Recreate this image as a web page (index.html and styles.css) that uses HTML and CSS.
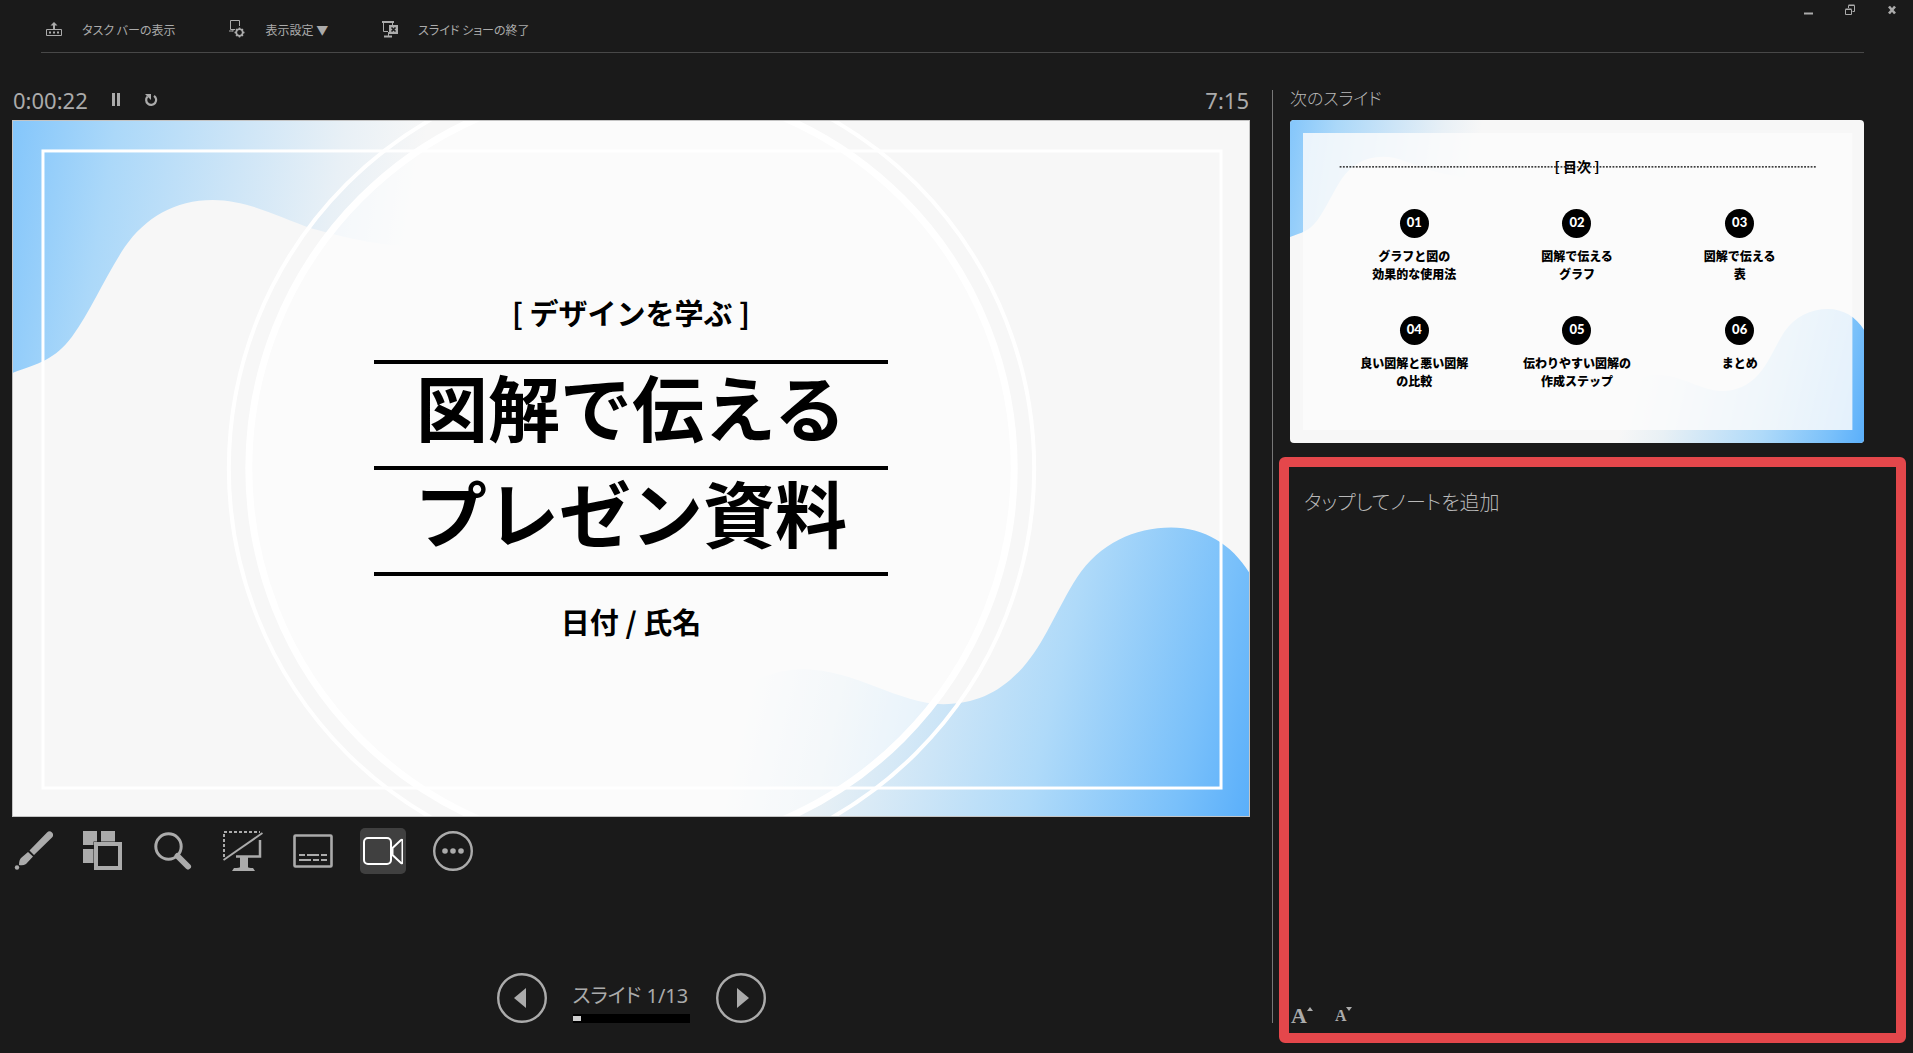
FILE: index.html
```html
<!DOCTYPE html>
<html lang="ja">
<head>
<meta charset="utf-8">
<title>発表者ツール</title>
<link rel="stylesheet" href="styles.css">
</head>
<body>
<svg class="defs" aria-hidden="true">
  <defs>
    <linearGradient id="blue-tl" gradientUnits="userSpaceOnUse" x1="0" y1="0" x2="405" y2="66">
      <stop offset="0" stop-color="#84c6fb"/>
      <stop offset=".25" stop-color="#abd8f9"/>
      <stop offset=".55" stop-color="#cde5f7"/>
      <stop offset=".8" stop-color="#e8f0f6"/>
      <stop offset="1" stop-color="#f7f7f7"/>
    </linearGradient>
    <linearGradient id="blue-br" gradientUnits="userSpaceOnUse" x1="1237" y1="696" x2="732" y2="576">
      <stop offset="0" stop-color="#5aaffa"/>
      <stop offset=".14" stop-color="#79c0fa"/>
      <stop offset=".42" stop-color="#afdaf9"/>
      <stop offset=".62" stop-color="#cce5f7"/>
      <stop offset=".82" stop-color="#e8f0f5"/>
      <stop offset="1" stop-color="#f7f7f7"/>
    </linearGradient>
    <symbol id="waves" viewBox="0 0 1237 696" preserveAspectRatio="none">
      <rect width="1237" height="696" fill="#f7f7f7"/>
      <path fill="url(#blue-tl)" d="M0 0H430V125C380 130 330 116 300 108C265 96 235 79 200 79C162 79 132 97 112 126C92 156 78 190 59 216C42 239 25 243 0 252Z"/>
      <path fill="url(#blue-br)" d="M1237 696V452C1220 424 1192 407 1159 407C1123 407 1087 423 1065 457C1045 488 1032 524 1010 548C988 572 964 584 931 584C887 584 842 549 791 549C751 549 720 570 690 600V696Z"/>
    </symbol>
  </defs>
</svg>

<header class="topbar">
  <nav class="commands" aria-label="表示コマンド">
    <button class="command" type="button">
      <svg width="16" height="18" viewBox="0 0 16 18" fill="none" stroke="currentColor"><path d="M.5 9.500h15v6H.5z"/><path d="M3 12.500h10" stroke-width="2" stroke-dasharray="2 2"/><path d="M8 9V3" stroke-width="2"/><path d="M4.500 5.500L8 2l3.500 3.500z" fill="currentColor" stroke="none"/></svg>
      タスク バーの表示
    </button>
    <button class="command" type="button">
      <svg width="16" height="18" viewBox="0 0 16 18" fill="none" stroke="currentColor"><path d="M6 9.500H1.500V.5h9V6M4 9.500v2M0 11h4" /><circle cx="10.500" cy="12.500" r="3.300" stroke-width="1.800"/><path d="M10.500 7.500v2m0 6v2m-5-5h2m6 0h2M7 9l1.500 1.500m4 4L14 16m0-7l-1.500 1.500m-4 4L7 16" stroke-width="1.400"/></svg>
      表示設定 ▼
    </button>
    <button class="command" type="button">
      <svg width="16" height="18" viewBox="0 0 16 18" fill="none" stroke="currentColor"><path d="M0 2h12" stroke-width="2"/><path d="M1.500 2v9.500H6M10.500 2v3M6.500 12v5" /><path d="M2 16.500h8" stroke-width="2"/><rect x="7" y="5" width="9" height="9" fill="currentColor" stroke="none"/><path d="M9.500 7.500l4 4m0-4l-4 4" stroke="#1a1a1a" stroke-width="1.600"/></svg>
      スライド ショーの終了
    </button>
  </nav>
  <div class="window-controls">
    <button type="button" aria-label="最小化"><svg width="10" height="12" viewBox="0 0 10 12"><path d="M1 9.500h9" stroke="currentColor" stroke-width="2"/></svg></button>
    <button type="button" aria-label="元に戻す"><svg width="10" height="12" viewBox="0 0 10 12" fill="none" stroke="currentColor"><path d="M.5 5.500h6v5h-6zM.5 5h6M3.500 4V1.500h6v6H7.500M3.500 1h6"/></svg></button>
    <button type="button" aria-label="閉じる"><svg width="10" height="12" viewBox="0 0 10 12"><path d="M2 2.500l6 7m0-7l-6 7" stroke="currentColor" stroke-width="2.600"/></svg></button>
  </div>
</header>
<hr class="rule">

<main class="presenter">
  <section class="current" aria-label="現在のスライド">
    <div class="timing">
      <time class="elapsed">0:00:22</time>
      <button type="button" aria-label="一時停止"><svg width="8" height="14" viewBox="0 0 8 14"><path d="M0 0h3v13H0zM5 0h3v13H5z" fill="currentColor"/></svg></button>
      <button type="button" aria-label="再開"><svg width="14" height="14" viewBox="0 0 14 14"><path d="M10 2.800A5 5 0 1 1 3.600 3.400" fill="none" stroke="currentColor" stroke-width="2.200"/><path d="M1 1h6v6z" fill="currentColor"/></svg></button>
      <time class="clock">7:15</time>
    </div>

    <div class="slide">
      <svg class="backdrop" viewBox="0 0 1237 696" preserveAspectRatio="none" aria-hidden="true">
        <use href="#waves" width="1237" height="696"/>
        <circle cx="619" cy="348" r="383" fill="#fff" fill-opacity=".5"/>
        <g fill="none" stroke="#fff">
          <circle cx="619" cy="348" r="403" stroke-width="4"/>
          <circle cx="619" cy="348" r="383" stroke-width="7"/>
          <rect x="30" y="30" width="1179" height="638" stroke-width="3"/>
        </g>
      </svg>
      <div class="cover">
        <p>[ デザインを学ぶ ]</p>
        <h1><span>図解で伝える</span><span>プレゼン資料</span></h1>
        <p>日付 / 氏名</p>
      </div>
    </div>

    <div class="tools">
      <button type="button" aria-label="ペン"><svg width="40" height="40" viewBox="0 0 40 40" fill="currentColor"><path d="M16.500 19.500L34 1.500a3.500 3.500 0 0 1 5 5L21 24zM15 21l5 4.500L13 33q-3 2-7 1q0-5 2-7z"/><circle cx="4" cy="36.500" r="2.200"/></svg></button>
      <button type="button" aria-label="すべてのスライド"><svg width="40" height="40" viewBox="0 0 40 40" fill="currentColor"><path d="M0 0h14v10.500H10.500V14H0zM18 0h14v10.500H18zM0 18h10.500v14H0z"/><path d="M13 13h24v24H13z" fill="none" stroke="currentColor" stroke-width="4"/></svg></button>
      <button type="button" aria-label="拡大"><svg width="40" height="40" viewBox="0 0 40 40" fill="none" stroke="currentColor"><circle cx="15.500" cy="15.500" r="12.700" stroke-width="3"/><path d="M24.500 25L35 35.500" stroke-width="6" stroke-linecap="round"/></svg></button>
      <button type="button" aria-label="黒い画面"><svg width="40" height="40" viewBox="0 0 40 40" fill="none" stroke="currentColor"><path d="M1 26V1h36" stroke-width="2" stroke-dasharray="3 2"/><path d="M.5 29L39.500 2" stroke-width="2"/><path d="M37 9v16.500H13" stroke-width="2.500"/><path d="M17 25h8v11q0 1 5 1l2 3H9l2-3q6 0 6-1z" fill="currentColor" stroke="none"/></svg></button>
      <button type="button" aria-label="字幕"><svg width="40" height="40" viewBox="0 0 40 40" fill="none" stroke="currentColor" stroke-width="2"><rect x="1.500" y="4.500" width="37" height="31" rx="1" stroke-width="2.600"/><path d="M6 24h6m2 0h12m2 0h6M6 29h12m2 0h6m2 0h6"/></svg></button>
      <button type="button" class="on" aria-label="カメラ" aria-pressed="true"><svg width="40" height="40" viewBox="0 0 40 40" fill="none" stroke="currentColor" stroke-width="2"><rect x="1" y="7" width="27" height="26" rx="4"/><path d="M29.500 17l8.500-8q1.500-1 1.500 1v21q0 2-1.500 1l-8.500-8z"/></svg></button>
      <button type="button" aria-label="その他"><svg width="40" height="40" viewBox="0 0 40 40" fill="currentColor"><circle cx="20" cy="20" r="18.800" fill="none" stroke="currentColor" stroke-width="2.400"/><circle cx="12" cy="20" r="2.800"/><circle cx="20" cy="20" r="2.800"/><circle cx="28" cy="20" r="2.800"/></svg></button>
    </div>

    <div class="pager">
      <button type="button" aria-label="前のスライド"><svg width="50" height="50" viewBox="0 0 50 50"><circle cx="25" cy="25" r="23.800" fill="none" stroke="currentColor" stroke-width="2.400"/><path d="M29 15v20L17 25z" fill="currentColor"/></svg></button>
      <div class="position">
        <span>スライド 1/13</span>
        <div class="progress" role="progressbar" aria-label="進行状況" aria-valuemin="0" aria-valuemax="13" aria-valuenow="1"><i></i></div>
      </div>
      <button type="button" aria-label="次のスライド"><svg width="50" height="50" viewBox="0 0 50 50"><circle cx="25" cy="25" r="23.800" fill="none" stroke="currentColor" stroke-width="2.400"/><path d="M21 15v20l12-10z" fill="currentColor"/></svg></button>
    </div>
  </section>

  <div class="divider"></div>

  <aside class="side">
    <section class="next">
      <h2>次のスライド</h2>
      <div class="thumb">
        <svg class="backdrop" viewBox="0 0 1237 696" preserveAspectRatio="none" aria-hidden="true">
          <use href="#waves" width="1237" height="696"/>
          <rect x="28" y="28" width="1184" height="640" fill="#fcfcfc" fill-opacity=".84"/>
          <path d="M107 101H1136" stroke="#000" stroke-width="3" stroke-dasharray="4 3"/>
        </svg>
        <h3>[ 目次 ]</h3>
        <ol class="contents">
          <li><b>01</b>グラフと図の<br>効果的な使用法</li>
          <li><b>02</b>図解で伝える<br>グラフ</li>
          <li><b>03</b>図解で伝える<br>表</li>
          <li><b>04</b>良い図解と悪い図解<br>の比較</li>
          <li><b>05</b>伝わりやすい図解の<br>作成ステップ</li>
          <li><b>06</b>まとめ</li>
        </ol>
      </div>
    </section>
    <section class="notes">
      <textarea aria-label="ノート" placeholder="タップしてノートを追加"></textarea>
      <div class="text-size">
        <button type="button" class="larger" aria-label="テキストの拡大">A<svg width="6" height="4" viewBox="0 0 6 4"><path d="M0 4l3-4 3 4z" fill="currentColor"/></svg></button>
        <button type="button" class="smaller" aria-label="テキストの縮小">A<svg width="6" height="4" viewBox="0 0 6 4"><path d="M0 0l3 4 3-4z" fill="currentColor"/></svg></button>
      </div>
    </section>
  </aside>
</main>
</body>
</html>
```

FILE: styles.css
```css
* { box-sizing: border-box; }

body {
  display: flex;
  flex-direction: column;
  min-height: 100vh;
  margin: 0;
  background: #1a1a1a;
  color: #ababab;
  font-family: "Noto Sans", "Noto Sans CJK JP", sans-serif;
}

button {
  display: flex;
  align-items: center;
  justify-content: center;
  margin: 0;
  padding: 0;
  border: 0;
  background: none;
  color: inherit;
  font: inherit;
}

svg { display: block; flex: none; }
h1, h2, h3, p, ol { margin: 0; padding: 0; }
.defs { position: absolute; width: 0; height: 0; }

/* Top bar */
.topbar {
  display: flex;
  justify-content: space-between;
  height: 52px;
}
.commands {
  display: flex;
  gap: 54px;
  padding: 6px 0 0 46px;
}
.command {
  gap: 20px;
  font-family: "Noto Sans CJK JP", sans-serif;
  font-size: 12px;
  font-feature-settings: "palt";
  white-space: nowrap;
}
.window-controls {
  display: flex;
  align-items: flex-start;
}
.window-controls button { width: 42px; height: 20px; }
.rule {
  width: auto;
  margin: 0 49px 0 41px;
  border: 0;
  border-top: 1px solid #484848;
}

/* Presenter layout */
.presenter {
  display: grid;
  grid-template-columns: 1272fr 1px 640fr;
  flex: 1;
  padding-top: 37px;
}
.divider {
  margin-bottom: 30px;
  background: #777;
}
.current {
  display: flex;
  flex-direction: column;
  min-width: 0;
  padding: 0 22px 0 12px;
}
.timing {
  display: flex;
  align-items: center;
  height: 30px;
  padding: 0 1px 10px;
  font-size: 22px;
  line-height: 20px;
}
.timing button { margin-left: 24px; }
.clock { margin-left: auto; }

/* Slides */
.slide, .thumb {
  position: relative;
  display: flex;
  flex-direction: column;
  overflow: hidden;
  color: #000;
  font-family: "Noto Sans CJK JP", sans-serif;
  font-weight: 700;
  text-align: center;
}
.slide {
  aspect-ratio: 1238 / 697;
  align-items: center;
  justify-content: center;
  padding-bottom: 4px;
  border: 1px solid #c4c4c4;
}
.backdrop {
  position: absolute;
  inset: 0;
  width: 100%;
  height: 100%;
}
.cover {
  position: relative;
  width: 514px;
}
.cover p {
  font-size: 29px;
  line-height: 38px;
}
.cover h1 {
  margin: 29px 0 26px;
  border-bottom: 4px solid #000;
  font-size: 72px;
  line-height: 82px;
}
.cover h1 span {
  display: block;
  padding-bottom: 20px;
  border-top: 4px solid #000;
}

/* Tools below the slide */
.tools {
  display: flex;
  gap: 24px;
  margin: 11px 0 0 -2px;
}
.tools button {
  width: 46px;
  height: 46px;
  border-radius: 5px;
}
.tools .on {
  background: #404040;
  color: #fff;
}
.pager {
  display: flex;
  justify-content: center;
  gap: 26px;
  margin-top: auto;
  padding-bottom: 30px;
}
.position {
  display: flex;
  flex-direction: column;
  justify-content: flex-end;
  gap: 6px;
  width: 117px;
  font-size: 20px;
  line-height: 24px;
  font-feature-settings: "palt";
  white-space: nowrap;
}
.progress {
  height: 9px;
  padding: 2px 0;
  background: #000;
}
.progress i {
  display: block;
  width: 7%;
  height: 5px;
  background: #d0d0d0;
}

/* Next slide */
.side {
  display: flex;
  flex-direction: column;
  min-width: 0;
  padding: 0 7px 10px 6px;
}
.next { padding: 0 42px 0 11px; }
.next h2 {
  height: 30px;
  color: #b8b8b8;
  font-family: "Noto Sans CJK JP", sans-serif;
  font-size: 17px;
  font-weight: 300;
  line-height: 16px;
  font-feature-settings: "palt";
}
.thumb {
  aspect-ratio: 574 / 323;
  padding: 37px 43px 0;
  border-radius: 4px;
}
.thumb h3 {
  position: relative;
  font-size: 14px;
  line-height: 18px;
}
.contents {
  position: relative;
  display: grid;
  grid-template-columns: repeat(3, 1fr);
  gap: 33px 0;
  margin-top: 34px;
  list-style: none;
  font-size: 12px;
  font-weight: 900;
  line-height: 18px;
}
.contents b {
  display: block;
  width: 29px;
  height: 29px;
  margin: 0 auto 9px;
  border-radius: 50%;
  background: #000;
  color: #fff;
  font-family: Lato, sans-serif;
  font-size: 13px;
  font-weight: 900;
  line-height: 26px;
}

/* Notes */
.notes {
  display: flex;
  flex-direction: column;
  flex: 1;
  margin-top: 14px;
  border: 10px solid #e4474b;
  border-radius: 6px;
}
.notes textarea {
  flex: 1;
  width: 100%;
  padding: 19px 15px;
  border: 0;
  outline: 0;
  background: none;
  color: inherit;
  font-family: "Noto Sans CJK JP", sans-serif;
  font-size: 20px;
  font-weight: 300;
  line-height: 32px;
  font-feature-settings: "palt";
  resize: none;
}
.notes textarea::placeholder { color: #b8b8b8; opacity: 1; }
.text-size {
  display: flex;
  gap: 22px;
  height: 30px;
  padding: 4px 2px;
  font-family: "Liberation Serif", serif;
  font-weight: 700;
  line-height: 18px;
}
.text-size button { align-items: baseline; }
.text-size svg { align-self: flex-start; }
.larger { font-size: 22px; }
.smaller { font-size: 16px; }
```
